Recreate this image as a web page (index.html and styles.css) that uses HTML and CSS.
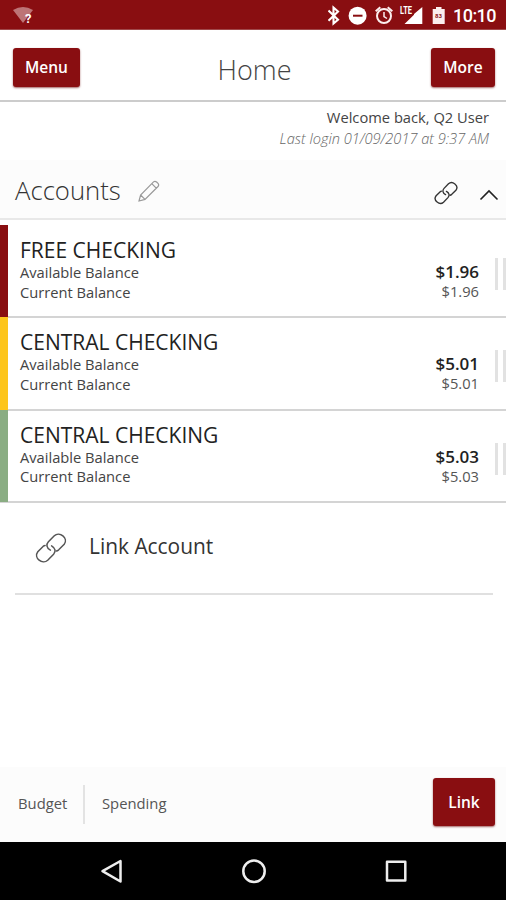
FILE: index.html
```html
<!DOCTYPE html>
<html lang="en">
<head>
<meta charset="utf-8">
<title>Home</title>
<link rel="stylesheet" href="styles.css">
</head>
<body>
<svg width="0" height="0" class="defs">
  <symbol id="chain" viewBox="0 0 32 32">
    <g fill="none" stroke="currentColor" stroke-linecap="round">
      <path d="M15.4 18.2C11.3 15.8 11.1 12.3 13.4 9.8L19.3 3.7C24.4-1.1 33.8 6.1 29.2 12.3L23.7 17.8Q22.4 18.8 21.3 19"/>
      <path d="M16.6 13.8C20.7 16.2 20.9 19.7 18.6 22.2L12.7 28.3C7.6 33.1-1.8 25.9 2.8 19.7L8.3 14.2Q9.3 13.4 10.1 13.4"/>
    </g>
  </symbol>
</svg>
<div class="status">
  <svg class="wifi" width="22" height="18" viewBox="0 0 22 18"><path d="M0 3Q10-3 20 3L10 16Z" fill="#bd7476"/><text x="12" y="15.5">?</text></svg>
  <svg class="indicators" width="178" height="30" viewBox="0 0 178 30">
    <path d="M.5 10.500 10 19.700 5.500 23.500V7.500L10 11.500.5 20.700" fill="none" stroke="#fff" stroke-width="2.100"/>
    <circle cx="29.6" cy="15.7" r="9" fill="#fff"/><path d="M25 15.7H34.5" stroke="#890e11" stroke-width="2"/>
    <g fill="none" stroke="#fbeeee" stroke-width="2"><circle cx="56" cy="16" r="7"/><path d="M56 12V16.5L59 18.5" stroke-width="1.5"/><path d="M47.7 11.2 52.3 7.2M64.3 11.2 59.7 7.2"/></g>
    <text class="lte" x="72" y="14" textLength="12" lengthAdjust="spacingAndGlyphs">LTE</text>
    <path d="M94.3 7V24H76.5L86 14.8V14Z" fill="#fff"/>
    <path d="M104.7 9H108V7H113.5V9H116.7V24H104.7Z" fill="#fbeeee"/><text class="charge" x="107" y="18">83</text>
    <text class="clock" x="125" y="22" textLength="43.500">10:10</text>
  </svg>
</div>
<header class="header">
  <button class="btn menu">Menu</button>
  <h1 class="title">Home</h1>
  <button class="btn more">More</button>
</header>
<section class="welcome">
  <div class="hello">Welcome back, Q2 User</div>
  <div class="last">Last login 01/09/2017 at 9:37 AM</div>
</section>
<section class="group">
  <h2>Accounts</h2>
  <svg class="pencil" width="22" height="22" viewBox="0 0 22 22"><path d="M1 21 2.6 15 15.5 1.900Q17 .6 18.600 2L20 3.400Q21.300 5 20 6.500L7 19.400ZM2.600 15 7 19.400M13.800 3.700 18.200 8.200" fill="none" stroke="#999" stroke-width="1.200"/></svg>
  <svg class="chain-small"><use href="#chain"/></svg>
  <svg class="caret" width="20" height="12" viewBox="0 0 20 12"><path d="M1.500 10.500 10 2 18.500 10.500" fill="none" stroke="#222" stroke-width="1.600"/></svg>
</section>
<main class="accounts">
  <article class="account red">
    <div class="names"><h3>FREE CHECKING</h3><p>Available Balance</p><p>Current Balance</p></div>
    <div class="amounts"><strong>$1.96</strong><span>$1.96</span></div><i class="grip"></i>
  </article>
  <article class="account yellow">
    <div class="names"><h3>CENTRAL CHECKING</h3><p>Available Balance</p><p>Current Balance</p></div>
    <div class="amounts"><strong>$5.01</strong><span>$5.01</span></div><i class="grip"></i>
  </article>
  <article class="account green">
    <div class="names"><h3>CENTRAL CHECKING</h3><p>Available Balance</p><p>Current Balance</p></div>
    <div class="amounts"><strong>$5.03</strong><span>$5.03</span></div><i class="grip"></i>
  </article>
</main>
<div class="link-row"><svg class="chain-large"><use href="#chain"/></svg><span>Link Account</span></div>
<footer class="footer">
  <span class="budget">Budget</span><span class="spending">Spending</span>
  <button class="btn link">Link</button>
</footer>
<nav class="nav">
  <svg width="506" height="58" viewBox="0 0 506 58" fill="none" stroke="#eee" stroke-width="2.500" stroke-linejoin="round">
    <path d="M120.500 19V39.500L102.500 29.200Z"/><circle cx="254" cy="29.200" r="10.700"/><path d="M387 19.700H405.300V38.500H387Z"/>
  </svg>
</nav>
</body>
</html>
```
FILE: styles.css
```css
* { box-sizing: border-box; }
body { margin: 0; width: 506px; height: 900px; overflow: hidden; display: flex; flex-direction: column; background: #fff; color: #333; font-family: "Open Sans", sans-serif; }
body > * { flex-shrink: 0; }
.defs { position: absolute; }
h1, h2, h3, p { margin: 0; font-weight: 400; }
.status { height: 30px; background: #890e11; display: flex; justify-content: space-between; border-bottom: 1px solid #a0484a; }
.wifi { margin: 7px 0 0 13px; }
.wifi text { font: 700 13px Roboto, sans-serif; fill: #fff; }
.lte { font: 700 10px Roboto, sans-serif; fill: #fff; }
.charge { font: 700 6px Roboto, sans-serif; fill: #890e11; }
.clock { font: 500 18px Roboto, sans-serif; fill: #fff; }
.header { height: 72px; border-bottom: 2px solid #ccc; padding: 0 11px 0 13px; display: grid; grid-template-columns: 67px 1fr 64px; align-items: start; }
.btn { height: 39px; margin: 18px 0 0; padding: 0; border: 0; border-radius: 3px; background: #890e11; color: #fff; font: 600 15.500px/37px "Open Sans", sans-serif; box-shadow: 0 1px 2px #66000099; }
.title { text-align: center; font-size: 27px; font-weight: 300; line-height: 40px; margin: 20px 2px 0 0; color: #444; }
.welcome { height: 58px; padding: 5px 17px 0 0; text-align: right; }
.hello { font-size: 14.700px; line-height: 21px; color: #444; }
.last { font-size: 14.600px; line-height: 20px; font-style: italic; font-weight: 300; color: #666; }
.group { height: 60px; padding: 0 7px 0 15px; background: #fcfcfc; border-bottom: 2px solid #e8e8e8; display: flex; align-items: center; }
.group h2 { width: 107px; margin-top: 4px; font-size: 25.700px; font-weight: 300; line-height: 36px; color: #333; }
.pencil { margin: 3px 0 0 16px; }
.chain-small { width: 24px; height: 24px; margin: 7px 21px 0 auto; color: #333; stroke-width: 1.800; }
.caret { margin-top: 12px; }
.accounts { padding-top: 5px; }
.account { height: 92.300px; border-left: 8px solid; padding: 12px 0 0 12px; display: flex; box-shadow: 0 1px #d4d4d4, inset 0 -1px #d4d4d4; }
.red { border-color: #890e11; }
.yellow { border-color: #fdc51b; }
.green { border-color: #8aad83; }
.names { flex: 1; }
.names h3 { font-size: 21px; line-height: 26px; color: #222; }
.names p { font-size: 14.700px; line-height: 19.500px; color: #444; }
.amounts { width: 80px; padding-top: 25px; display: flex; flex-direction: column; text-align: right; }
.amounts strong { font-size: 17px; line-height: 20px; font-weight: 600; color: #222; }
.amounts span { font-size: 14.700px; line-height: 19px; color: #555; }
.grip { width: 11px; height: 32px; margin: 21px 0 0 16px; border: solid #e2e2e2; border-width: 0 3px; }
.link-row { height: 93px; margin: 0 13px 0 15px; padding: 2px 0 0 20px; border-bottom: 2px solid #e0e0e0; display: flex; align-items: center; }
.link-row span { margin: -5px 0 0 22px; font-size: 20.900px; line-height: 30px; color: #333; }
.chain-large { width: 32px; height: 32px; color: #555; stroke-width: 1.500; }
.footer { height: 75px; margin-top: auto; padding: 0 11px 0 18px; background: #fcfcfc; display: flex; align-items: center; font-size: 14.800px; color: #555; }
.budget { width: 67px; height: 39px; line-height: 37px; border-right: 2px solid #e3e3e3; }
.spending { margin: -4px 0 0 17px; }
.link { width: 62px; height: 48px; margin: -5px 0 0 auto; }
.nav { height: 58px; background: #000; }
.nav svg { display: block; }
```
